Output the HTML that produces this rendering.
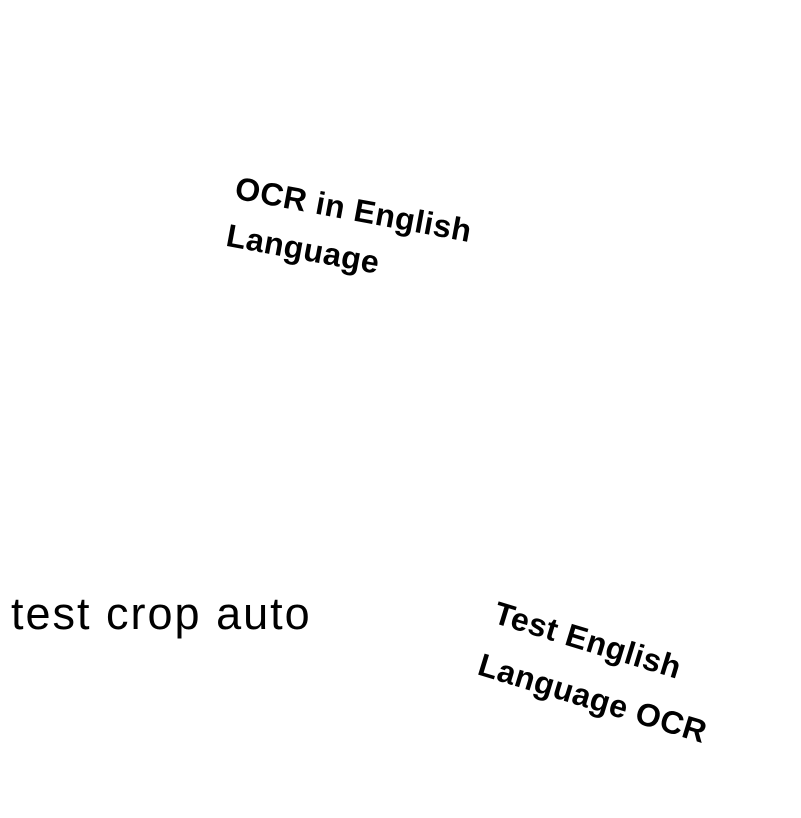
<!DOCTYPE html>
<html><head><style>
html,body{margin:0;padding:0;background:#fff;width:801px;height:818px;overflow:hidden;position:relative}
div{position:absolute;color:#000;font-family:"Liberation Sans",sans-serif;white-space:nowrap;transform-origin:0 0}
.b{font-weight:bold;font-size:32px;line-height:48px;letter-spacing:0.5px}
</style></head><body>
<div class="b" style="left:240px;top:164px;transform:rotate(10.5deg)">OCR in English<br>Language</div>
<div style="left:11px;top:586px;font-size:45px;line-height:56px;letter-spacing:2px">test crop auto</div>
<div class="b" style="left:503px;top:586px;transform:rotate(17deg);line-height:54px">Test English<br>Language OCR</div>
</body></html>
